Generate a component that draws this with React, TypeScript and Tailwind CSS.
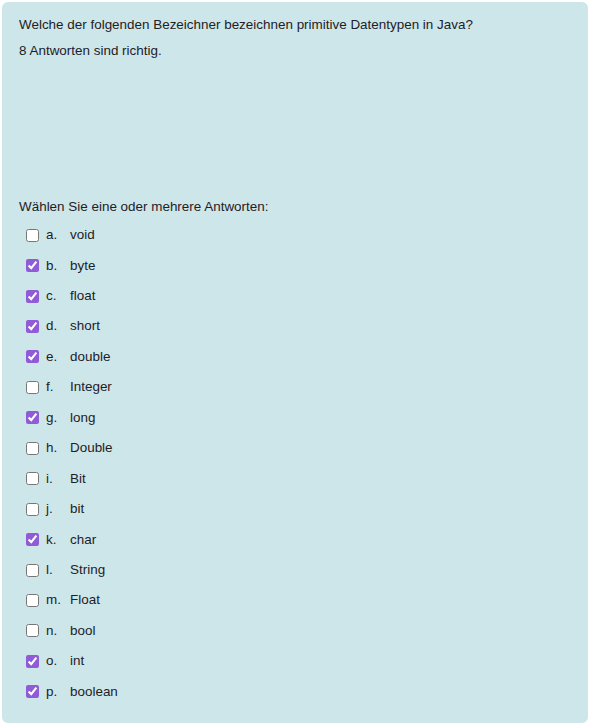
import React from "react";

const answers: { letter: string; label: string; checked: boolean }[] = [
  { letter: "a.", label: "void", checked: false },
  { letter: "b.", label: "byte", checked: true },
  { letter: "c.", label: "float", checked: true },
  { letter: "d.", label: "short", checked: true },
  { letter: "e.", label: "double", checked: true },
  { letter: "f.", label: "Integer", checked: false },
  { letter: "g.", label: "long", checked: true },
  { letter: "h.", label: "Double", checked: false },
  { letter: "i.", label: "Bit", checked: false },
  { letter: "j.", label: "bit", checked: false },
  { letter: "k.", label: "char", checked: true },
  { letter: "l.", label: "String", checked: false },
  { letter: "m.", label: "Float", checked: false },
  { letter: "n.", label: "bool", checked: false },
  { letter: "o.", label: "int", checked: true },
  { letter: "p.", label: "boolean", checked: true },
];

export default function App() {
  return (
    <div className="h-[727px] w-[591px] bg-white p-[2px] font-['Liberation_Sans',Arial,sans-serif] text-[13.45px] text-[#1d2125]">
      <div className="h-[721px] w-[586px] rounded-[6px] bg-[#cde6ea] px-[17px] pt-[13px]">
        <p className="leading-[20px]">Welche der folgenden Bezeichner bezeichnen primitive Datentypen in Java?</p>
        <p className="mt-[6px] leading-[20px]">8 Antworten sind richtig.</p>
        <p className="mt-[136px] leading-[20px]">Wählen Sie eine oder mehrere Antworten:</p>
        <div className="mt-[3px] flex flex-col">
          {answers.map((a) => (
            <label key={a.letter} className="flex h-[30.45px] items-center">
              <input
                type="checkbox"
                defaultChecked={a.checked}
                className="ml-[7px] mr-[7px] h-[13px] w-[13px] accent-[#8f5bd6]"
              />
              <span className="w-[24px]">{a.letter}</span>
              <span>{a.label}</span>
            </label>
          ))}
        </div>
      </div>
    </div>
  );
}
